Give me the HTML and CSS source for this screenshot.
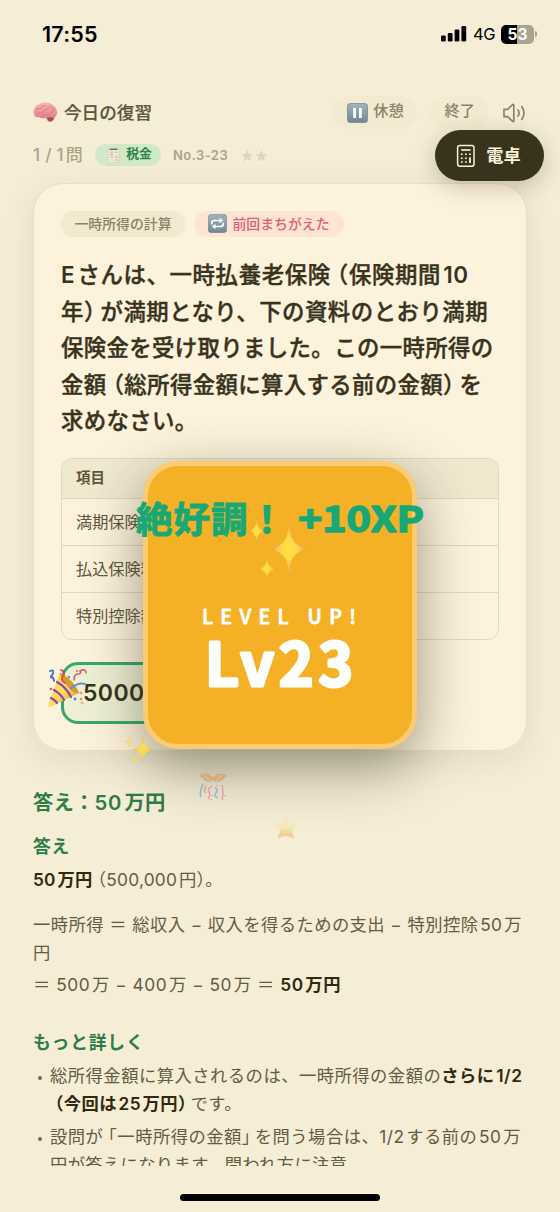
FILE: index.html
```html
<!DOCTYPE html>
<html lang="ja">
<head>
<meta charset="utf-8">
<title>今日の復習</title>
<link rel="stylesheet" href="styles.css">
</head>
<body>
<svg class="defs" width="0" height="0">
  <defs>
    <radialGradient id="glint"><stop offset="0" stop-color="#ffe23c"/><stop offset=".4" stop-color="#ffd94a"/><stop offset=".75" stop-color="#f6b95c"/><stop offset="1" stop-color="#ee9548"/></radialGradient>
    <linearGradient id="slate" x1="0" y1="0" x2="0" y2="1"><stop offset="0" stop-color="#a2b5bd"/><stop offset="1" stop-color="#6f8794"/></linearGradient>
    <linearGradient id="pink" x1="0" y1="0" x2="0" y2="1"><stop offset="0" stop-color="#f9b5b5"/><stop offset="1" stop-color="#dc7484"/></linearGradient>
    <linearGradient id="cone" x1="0" y1="0" x2="1" y2="1"><stop offset="0" stop-color="#f6cf3d"/><stop offset=".5" stop-color="#ffe25a"/><stop offset="1" stop-color="#cf8d22"/></linearGradient>
    <linearGradient id="pale" x1="0" y1="0" x2="0" y2="1"><stop offset="0" stop-color="#f0e8cc"/><stop offset=".5" stop-color="#f5e9ab"/><stop offset="1" stop-color="#dfb566"/></linearGradient>
    <path id="glint4" d="M0-1C.08-.35.2-.2 1 0C.2.2.08.35 0 1C-.08.35-.2.2-1 0C-.2-.2-.08-.35 0-1Z"/>
  </defs>
</svg>

<div class="phone">
  <header class="status">
    <span class="clock">17:55</span>
    <span class="status-right">
      <svg class="signal" width="26" height="16" viewBox="0 0 26 16"><rect x="0" y="9.5" width="4.8" height="6" rx="1.3"/><rect x="6.8" y="7" width="4.8" height="8.5" rx="1.3"/><rect x="13.6" y="3.5" width="4.8" height="12" rx="1.3"/><rect x="20.4" y="0" width="4.8" height="15.5" rx="1.3"/></svg>
      <span class="net">4G</span>
      <span class="battery">53</span><i class="battery-tip"></i>
    </span>
  </header>

  <div class="topbar">
    <svg class="brain" width="25" height="21" viewBox="0 0 25 21">
      <path d="M1 12C0 7 3 3 7 2C11-.5 18 0 21 4C25 7 25 13 22 15C21 18 19 20 16 19.5C14 19 14 17 13 16C10 17 7 16 6 15C3 16 1 14 1 12Z" fill="url(#pink)"/>
      <path d="M3 8C5 5 8 8 9 5S13 5 13 3M4 12C6 9 9 13 11 9S16 9 16 5M9 14C12 11 14 14 16 12S20 12 19 7M17 3C18 6 21 5 22 9M14 17C17 15 20 17 22 13" fill="none" stroke="#d0687c" stroke-width=".7"/>
      <path d="M14 16C17 15 20 16 21 16C20 19 18 20 16 19.5Z" fill="#a84a5a"/>
    </svg>
    <h1>今日の復習</h1>
    <button class="soft pause"><svg width="21" height="20" viewBox="0 0 21 20"><rect x=".4" y=".4" width="20.2" height="19.2" rx="3.2" fill="url(#slate)" stroke="#6d8490" stroke-width=".8"/><path d="M6.2 5h2.8v10H6.2zM12 5h2.8v10H12z" fill="#fff"/></svg><span>休憩</span></button>
    <button class="soft end"><span>終了</span></button>
    <svg class="speaker" width="24" height="20" viewBox="0 0 24 20" fill="none" stroke="#88836a" stroke-width="1.7" stroke-linecap="round" stroke-linejoin="round"><path d="M1 6.4H4.6L9.2 2Q10.8.6 10.8 2.6V17.4Q10.8 19.4 9.2 18L4.6 13.6H1Z"/><path d="M15 7Q17.2 10 15 13M18.8 3.6Q23.2 10 18.8 16.4"/></svg>
  </div>

  <div class="meta">
    <span class="count">1 / 1<i class="gap"></i>問</span>
    <span class="tax"><svg width="15" height="17" viewBox="0 0 15 17"><path d="M2 1h11v15l-2-1-2 1-2-1-2 1-3-1z" fill="#eee8d8" stroke="#d3cdbc" stroke-width=".6"/><path d="M3.5 2.3h8" stroke="#615c50" stroke-width="1.3"/><path d="M4 5.2h3M4 7.5h3M4 10h3M9 5.2h2.5M9 10h2.5M9 13h2.5" stroke="#a9a390" stroke-width=".7"/></svg><span>税金</span></span>
    <span class="no">No.3-23</span>
    <svg class="stars" width="27" height="13" viewBox="0 0 27 13" fill="#ddd5be"><path d="M6.3.8 8 4.9l4.4.3L9 8l1.1 4.4L6.3 10l-3.8 2.4L3.6 8 .2 5.2l4.400-.3z"/><path transform="translate(14 0)" d="M6.3.8 8 4.9l4.4.3L9 8l1.1 4.4L6.3 10l-3.8 2.4L3.6 8 .2 5.2l4.400-.3z"/></svg>
  </div>

  <main class="card">
    <div class="chips">
      <span class="chip topic">一時所得の計算</span>
      <span class="chip wrong"><svg width="19" height="19" viewBox="0 0 19 19"><rect x=".3" y=".3" width="18.4" height="18.4" rx="3.2" fill="url(#slate)" stroke="#6d8490" stroke-width=".6"/><path d="M3.8 10.5V9Q3.8 6.5 6.3 6.5H12.5M15.2 8.5V10Q15.2 12.5 12.7 12.5H6.5" fill="none" stroke="#fff" stroke-width="1.7"/><path d="M11.5 3.7 15.2 6.5l-3.7 2.8zM7.5 9.7 3.8 12.5l3.7 2.8z" fill="#fff"/></svg>前回まちがえた</span>
    </div>
    <div class="question">
      <p class="q1"><b>E</b><i class="gap"></i>さんは、一時払養老保険<span class="open">（</span>保険期間<i class="gap"></i><b>10</b></p>
      <p class="q2">年<span class="close">）</span>が満期となり、下の資料のとおり満期</p>
      <p class="q3">保険金を受け取りました。この一時所得の</p>
      <p class="q4">金額<span class="open">（</span>総所得金額に算入する前の金額<span class="close">）</span>を</p>
      <p class="q5">求めなさい。</p>
    </div>
    <div class="table">
      <div class="row head">項目</div>
      <div class="row">満期保険金</div>
      <div class="row">払込保険料</div>
      <div class="row">特別控除額</div>
    </div>
    <div class="answer">500000</div>
  </main>

  <section class="explain">
    <h2>答え：<span class="num">50</span><i class="gap"></i>万円</h2>
    <h3 class="h-a">答え</h3>
    <p class="e1"><b>50<i class="gap"></i>万円</b><span class="open">（</span>500,000<i class="gap"></i>円<span class="close2">）</span>。</p>
    <p class="e2">一時所得 ＝ 総収入 − 収入を得るための支出 − 特別控除<i class="gap"></i>50<i class="gap"></i>万</p>
    <p class="e3">円</p>
    <p class="e4">＝ 500<i class="gap"></i>万 − 400<i class="gap"></i>万 − 50<i class="gap"></i>万 ＝ <b>50<i class="gap"></i>万円</b></p>
    <h3 class="h-b">もっと詳しく</h3>
    <ul>
      <li><p class="b1">総所得金額に算入されるのは、一時所得の金額の<b>さらに<i class="gap"></i>1/2</b></p>
        <p class="b2"><b><span class="open">（</span>今回は<i class="gap"></i>25<i class="gap"></i>万円<span class="close">）</span></b>です。</p></li>
      <li><p class="b3">設問が<span class="open">「</span>一時所得の金額<span class="close">」</span>を問う場合は、1/2<i class="gap"></i>する前の<i class="gap"></i>50<i class="gap"></i>万</p>
        <p class="b4">円が答えになります。問われ方に注意</p></li>
    </ul>
  </section>
  <div class="home"></div>

  <button class="calc"><svg width="20" height="24" viewBox="0 0 20 24" fill="none" stroke="#f8f0d8" stroke-width="1.5"><rect x="1.6" y="1.6" width="16.4" height="20.6" rx="2.2"/><path d="M5.2 6h9.4" stroke-width="1.7"/><path d="M4.9 10.3h1.8M9 10.3h1.8M13.1 10.3h1.8M4.9 14.2h1.8M9 14.2h1.8M4.9 18.1h1.8M9 18.1h1.8"/><path d="M14 13.3v5.6" stroke-width="1.8"/></svg>電卓</button>

  <div class="levelup">
    <svg class="level-text" width="264" height="278" viewBox="0 0 264 278">
      <g fill="url(#glint)">
        <use href="#glint4" transform="translate(141 83) scale(17 27)"/>
        <use href="#glint4" transform="translate(108.5 65) scale(8 12)"/>
        <use href="#glint4" transform="translate(119 103) scale(8 12)"/>
      </g>
      <text class="level-label" x="54" y="157.7" textLength="154">LEVEL UP!</text>
      <text class="level-num" x="57" y="219.7" textLength="148">Lv23</text>
    </svg>
  </div>
  <svg class="xp" width="320" height="60" viewBox="0 0 320 60">
    <text x="6" y="43" textLength="149" lengthAdjust="spacing">絶好調！</text>
    <text class="xp-num" x="168" y="42" textLength="126" lengthAdjust="spacingAndGlyphs">+10XP</text>
  </svg>

  <svg class="popper" width="42" height="42" viewBox="0 0 42 42" fill="none" stroke-linecap="round">
    <path d="M13 5C20 7 28 17 32 25L4 38.5Q1 39.5 1.5 36Z" fill="url(#cone)"/>
    <path d="M10 14Q19 19 24 29M7 22Q14 26 17 32M4 30Q9 33 10 35" stroke="#8b49b3" stroke-width="2.2"/>
    <path d="M13 5C19 6 30 18 32 25C26 27 15 14 13 5Z" fill="#d99a29"/>
    <path d="M3 3Q7 1 6 5T3 9Q7 9 7 13" stroke="#416ed0" stroke-width="1.8"/>
    <path d="M14 2Q19 4 16 8T18 15" stroke="#df4962" stroke-width="1.8"/>
    <path d="M27 12Q27 6 31 6T33 3Q39 0 39 5" stroke="#dd5b78" stroke-width="1.6"/>
    <path d="M24 20Q32 14 38 16" stroke="#5e91dd" stroke-width="2.2"/>
    <g stroke="none"><circle cx="22" cy="9" r="1.3" fill="#58a0d0"/><circle cx="30" cy="3" r="1.2" fill="#c9a344"/><circle cx="4" cy="21" r="1.3" fill="#e15d6b"/><circle cx="34" cy="25" r="1.5" fill="#e6ad4c"/><circle cx="28" cy="31" r="1.4" fill="#4e83cb"/><circle cx="35" cy="35" r="1.4" fill="#e8b67f"/><circle cx="34" cy="31" r="1.2" fill="#cf7fc0"/></g>
  </svg>
  <svg class="spark-small" width="30" height="29" viewBox="0 0 30 29"><g fill="url(#glint)"><use href="#glint4" transform="translate(18 14.5) scale(11 14)"/><use href="#glint4" transform="translate(4 7) scale(4 6)"/><use href="#glint4" transform="translate(9 23.500) scale(4 5.500)"/></g></svg>
  <svg class="confetti" width="28" height="29" viewBox="0 0 28 29" fill="none">
    <path d="M0 3C4-1 11 0 14 5C17 0 24-1 28 3C24 5 25 9 17 9L14 7L11 9C5 9 5 5 0 3Z" fill="#d0a066"/><path d="M5 2l6 6M23 2l-6 6" stroke="#f0cc8d"/>
    <path d="M7 14Q4 18 7 20M13 13Q8 16 10 19T9 26M23 12Q25 19 23 27" stroke="#e8798b" stroke-width="1.3"/><path d="M4 11Q0 19 2 24M16 15Q20 17 17 20T19 25" stroke="#6f9ce0" stroke-width="1.5"/><path d="M7 12v1M18 12v1M13 22v1M26 22v1M12 26v1" stroke="#d77d83" stroke-width="1.5"/>
  </svg>
  <svg class="fade-star" width="26" height="24" viewBox="0 0 26 24"><path d="M13 0 16.5 8 25.5 9 19 15 21 23.5Q13 18 5 23.5L7 15 .5 9 9.5 8Z" fill="url(#pale)"/></svg>
</div>
</body>
</html>
```
FILE: styles.css
```css
* { box-sizing: border-box; }
body, h1, h2, h3, p, ul { margin: 0; padding: 0; }
body { background: #f5edd6; }
.defs { position: absolute; }
button { border: 0; font: inherit; padding: 0; }
svg { flex: none; }
.phone {
  position: relative; width: 560px; height: 1212px; overflow: hidden;
  background: #f5edd6; color: #5d573d;
  font-family: Inter, "Noto Sans CJK JP", sans-serif;
  display: flex; flex-direction: column;
}
p, h1, h2, h3, span, button { white-space: nowrap; }
/* thin space between kana/kanji and latin digits */
.gap { display: inline-block; width: .1em; }

.status { height: 68px; display: flex; align-items: center; justify-content: space-between; padding: 0 23px 0 42px; color: #000; flex: none; }
.clock { font-size: 21.5px; font-weight: 600; letter-spacing: .2px; }
.status-right { display: flex; align-items: center; }
.signal { margin-right: 6px; }
.net { font-size: 16.5px; width: 28px; letter-spacing: -.5px; }
.battery { width: 33px; height: 19px; border-radius: 5px; background: linear-gradient(90deg, #000 0 16.5px, #aaa493 16.5px); color: #fff; font-size: 15.5px; font-weight: 700; line-height: 19px; text-align: center; }
.battery-tip { width: 2px; height: 6px; margin-left: 1px; background: #aaa493; border-radius: 0 2px 2px 0; }

.topbar { height: 33px; margin: 28px 33px 0; display: flex; align-items: center; flex: none; }
.brain { margin-right: 6px; }
h1 { font-size: 17.6px; font-weight: 500; width: 270px; color: #5d573d; line-height: 30px; -webkit-text-stroke: .2px; }
.soft { height: 33px; border-radius: 17px; background: #f3ead2; color: #88836a; font-size: 15.2px; font-weight: 500; display: flex; align-items: center; justify-content: center; }
.soft span { line-height: 20px; margin-top: -3px; }
.pause { width: 84px; gap: 5px; padding-left: 2px; }
.end { width: 58px; margin-left: 14px; padding-left: 1px; }
.speaker { margin-left: 15px; }

.meta { height: 22px; margin: 15px 33px 0; display: flex; align-items: center; flex: none; color: #aaa38a; }
.count { font-size: 17px; font-weight: 500; width: 62px; line-height: 22px; letter-spacing: .3px; }
.tax { width: 66px; height: 22px; border-radius: 11px; background: #d1e9c8; color: #2d834a; font-size: 12.8px; font-weight: 600; display: flex; align-items: center; justify-content: center; gap: 5px; padding-left: 2px; }
.tax span { line-height: 18px; margin-top: -2px; }
.no { font-size: 13px; font-weight: 600; margin-left: 12px; width: 68px; letter-spacing: .45px; }

.card { margin: 17px 33px 0; height: 568px; padding: 27px 27px 0; flex: none; border-radius: 30px; border: 1px solid #e9dfc6; background: #fdf2dc; box-shadow: 0 9px 32px rgba(95, 85, 35, .11); }
.chips { display: flex; gap: 9px; }
.chip { height: 26px; border-radius: 13px; display: flex; align-items: center; justify-content: center; font-size: 13.9px; font-weight: 500; line-height: 24px; padding-bottom: 1px; }
.topic { width: 124px; background: #f2e9cf; color: #88836a; }
.wrong { width: 150px; background: #fde4d4; color: #df626c; gap: 5px; }
.question { margin-top: 19px; font-size: 22.4px; font-weight: 500; line-height: 37px; color: #38331d; -webkit-text-stroke: .4px #38331d; }
.question b { font-weight: 600; -webkit-text-stroke: 0; }
.question p { height: 36.5px; letter-spacing: .37px; }
.question .q1 { letter-spacing: .64px; }
.question .q2 { letter-spacing: .5px; }
.open, .close, .close2 { font-feature-settings: "halt"; }
.open { margin-left: .28em; }
.close { margin-right: .22em; }

.table { margin-top: 19px; height: 182px; width: 438px; border: 1px solid #e0d7bf; border-radius: 11px; overflow: hidden; }
.row { height: 47.3px; line-height: 46px; padding-left: 14px; font-size: 16.2px; border-top: 1px solid #e0d7bf; }
.head { height: 39px; line-height: 38px; background: #f1e8d0; border: 0; font-size: 14.4px; font-weight: 600; }
.answer { margin-top: 22px; width: 280px; height: 62px; border: 3px solid #35a86b; border-radius: 17px; background: #edf0d5; color: #38331d; font-size: 23px; font-weight: 600; line-height: 57px; padding-left: 19px; letter-spacing: .4px; }

.explain { height: 415px; overflow: hidden; padding: 33px 33px 0; flex: none; font-size: 17.3px; color: #625c43; }
.explain p { height: 28px; line-height: 28px; letter-spacing: .36px; }
.explain b { color: #30290f; font-weight: 600; }
h2 { font-size: 20.3px; line-height: 37px; height: 36px; color: #2d7d49; font-weight: 600; letter-spacing: .2px; }
.num { letter-spacing: .9px; }
h3 { font-size: 17.8px; line-height: 29px; height: 28px; color: #2d7d49; font-weight: 600; letter-spacing: .8px; }
.h-a { margin-top: 12px; }
.e1 { margin-top: 6px; }
.explain .e1 { letter-spacing: .25px; }
.e2 { margin-top: 17px; }
.explain .e2 { letter-spacing: .44px; }
.e4 { margin-top: 4px; }
.explain .e4 { letter-spacing: .55px; }
.h-b { margin-top: 29px; }
ul { list-style: none; margin-top: 6px; }
li { position: relative; padding-left: 17px; margin-bottom: 5px; }
li::before { content: ""; position: absolute; left: 5px; top: 14px; width: 4px; height: 4px; border-radius: 50%; background: #716b50; }
.explain .b1, .explain .b3 { letter-spacing: .5px; }

.home { width: 200px; height: 7px; border-radius: 4px; background: #000; margin: 28px auto 0; flex: none; }

.calc { position: absolute; left: 435px; top: 130px; width: 109px; height: 51px; border-radius: 26px; background: #38331d; color: #f8f0d8; font-size: 17.2px; font-weight: 700; line-height: 50px; display: flex; align-items: center; justify-content: center; gap: 10px; padding-right: 2px; box-shadow: 0 6px 22px rgba(55, 48, 20, .25); }

.levelup { position: absolute; left: 143px; top: 461px; width: 274px; height: 288px; border: 5px solid #fbcb73; border-radius: 35px; background: #f4b126; box-shadow: 0 18px 56px rgba(50, 45, 30, .48); }
.level-text, .xp { font-family: "Noto Sans CJK JP", sans-serif; font-weight: 700; stroke-linejoin: round; stroke-linecap: round; }
.level-text { display: block; }
.level-text text { fill: #fff; stroke: #fff; }
.level-label { font-size: 19.5px; font-weight: 500; stroke-width: .8; }
.level-num { font-size: 59px; stroke-width: 3; }
.xp { position: absolute; left: 130px; top: 490px; }
.xp text { font-size: 36.5px; fill: #18a876; stroke: #18a876; stroke-width: 1; }
.xp .xp-num { font-size: 35px; stroke-width: 1.6; }
.popper { position: absolute; left: 47px; top: 668px; }
.spark-small { position: absolute; left: 125px; top: 735px; opacity: .8; }
.confetti { position: absolute; left: 199px; top: 773px; opacity: .7; }
.fade-star { position: absolute; left: 273px; top: 815px; opacity: .7; }
```
